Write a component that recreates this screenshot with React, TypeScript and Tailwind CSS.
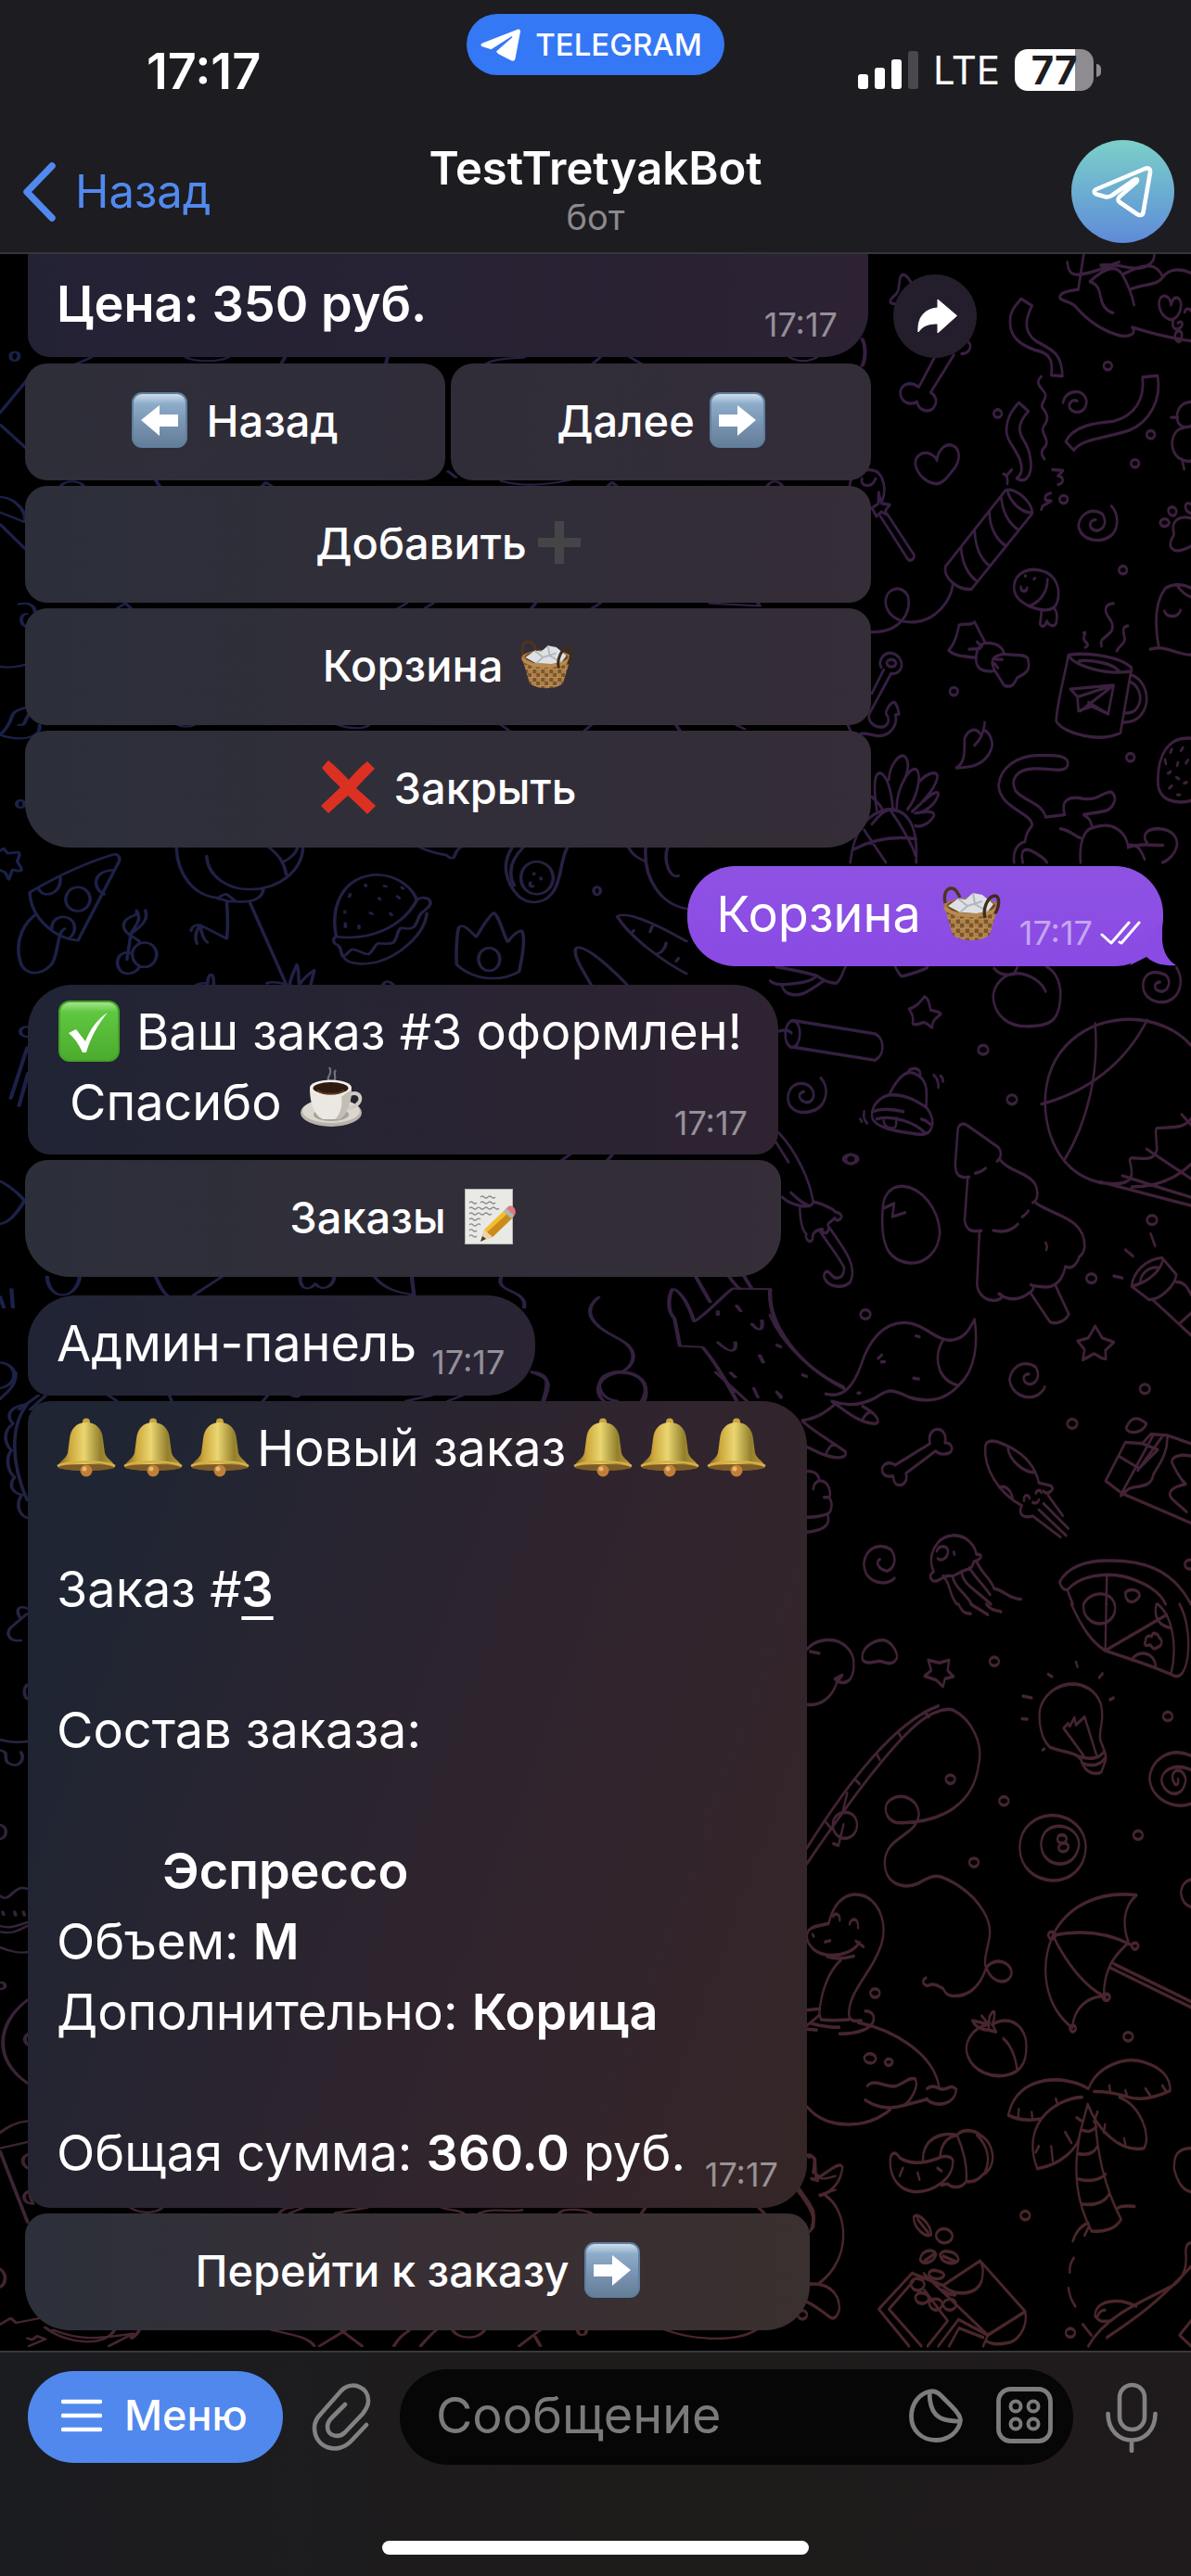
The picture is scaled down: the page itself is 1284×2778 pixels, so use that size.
import type { ReactNode } from "react";

/* ---------- Wallpaper ---------- */

function Wallpaper() {
  return (
    <svg
      aria-hidden="true"
      className="absolute inset-0 h-full w-full"
      viewBox="0 274 1284 2261"
      preserveAspectRatio="xMidYMin slice"
      fill="none"
    >
      <defs>
        <linearGradient id="wp-h" gradientUnits="userSpaceOnUse" x1="0" y1="0" x2="1284" y2="0">
          <stop offset="0" stopColor="#1b2149" />
          <stop offset="0.4" stopColor="#272043" />
          <stop offset="0.8" stopColor="#391f43" />
          <stop offset="1" stopColor="#3d203d" />
        </linearGradient>
        <linearGradient id="wp-v" gradientUnits="userSpaceOnUse" x1="300" y1="1300" x2="700" y2="2500">
          <stop offset="0" stopColor="#4a262d" stopOpacity="0" />
          <stop offset="1" stopColor="#4a262a" />
        </linearGradient>
        <mask id="wp-m" maskUnits="userSpaceOnUse" x="0" y="260" width="1284" height="2290">
          <g stroke="#fff" strokeWidth="3" strokeLinecap="round" strokeLinejoin="round">
            <g transform="translate(840 270) scale(0.3333 0.4209)">
              <g strokeWidth="8">
                <path d="M985 10L968 98M1005 80C1060 40 1090 38 1110 62C1130 90 1140 110 1148 140M1005 80C1032 88 1035 100 1040 120C1045 142 1060 156 1080 160M968 100C930 104 905 110 908 122C920 132 945 130 960 145C1000 182 1050 207 1100 218C1140 224 1156 210 1142 197C1200 212 1260 224 1332 232M932 30C935 60 950 66 985 60C1030 55 1060 40 1100 30M1213 10C1215 30 1190 50 1140 45C1110 42 1080 34 1040 38M1135 100C1180 84 1220 92 1240 70C1260 45 1300 46 1332 58M1110 62C1140 50 1170 38 1200 40C1220 42 1230 52 1240 66" />
                <path d="M1268 178C1238 172 1225 148 1230 128C1238 108 1264 116 1268 140C1274 114 1298 116 1300 140C1298 162 1285 175 1268 178M1275 180C1268 196 1280 206 1292 200C1310 196 1306 176 1290 186M1292 206C1270 212 1284 242 1298 232C1308 214 1300 206 1292 206M1312 158C1314 148 1326 148 1332 154" />
                <path d="M783 124L818 142C800 170 785 205 830 232C880 254 915 262 916 322L880 320C888 280 872 262 830 256C770 240 740 215 748 170C755 145 768 140 783 124Z" />
                <path d="M848 323C820 345 860 355 862 372C860 385 848 390 850 402C866 415 872 430 862 442C850 455 850 462 858 474C870 492 866 500 854 508C844 520 852 528 858 534" />
                <path d="M775 390L806 412C775 440 770 460 790 485C815 515 825 565 800 585C790 592 775 588 768 584C785 575 788 560 780 540C765 505 735 490 735 460C738 425 755 408 775 390Z" />
                <path d="M918 390C924 368 945 362 965 362C990 366 1000 385 990 402C978 418 950 418 940 404C934 390 950 380 964 386M1175 325L1224 321C1238 380 1200 440 1130 462C1060 480 980 482 953 512L927 490C950 450 1020 442 1080 438C1150 425 1184 380 1175 325Z" />
                <path d="M725 573C735 574 740 580 738 598M738 575L752 562M884 562L918 564L902 578C920 580 924 596 902 600M878 622C862 624 858 632 862 640L880 642L852 655L848 664" />
                <path d="M732 615L538 810C530 840 580 872 622 868L818 675C825 650 765 605 732 615ZM738 614C745 645 785 672 815 672M718 630C722 672 745 700 772 715M680 668C680 712 705 744 734 757M632 715C634 760 650 790 680 808M588 762C592 800 610 830 640 848" />
                <path d="M562 855C555 900 505 948 440 952C380 956 345 930 344 900C348 860 400 858 416 885C430 920 400 978 300 978" />
                <path d="M445 560C430 530 460 512 490 522C500 526 508 532 510 538C515 505 545 490 570 504C590 520 580 548 560 565C545 580 530 598 508 598C480 596 455 580 445 560Z" />
                <path d="M502 275L452 350C415 330 380 350 396 378C408 396 435 394 446 388C450 408 480 418 498 405C516 388 505 370 490 364L565 268M590 265C622 264 622 240 612 235M425 80C410 60 395 55 390 75C386 105 386 108 370 118C355 130 352 138 385 137" />
                <path d="M228 602C232 565 290 555 318 568C345 588 345 625 330 645M268 585C260 605 300 612 312 585M300 660L320 650L322 620L330 648L358 652L344 666L346 676L330 670L315 682ZM328 682L415 790C425 800 440 788 436 780L350 676" />
                <path d="M330 1068C318 1050 340 1030 362 1032C395 1036 405 1065 388 1078C375 1088 362 1084 362 1084L290 1190C288 1215 320 1225 340 1220C360 1212 354 1195 346 1188C344 1180 358 1158 372 1158C382 1162 384 1175 388 1188L376 1190C384 1215 360 1245 320 1244C290 1242 288 1236 264 1238M300 1135L338 1075M348 1058C350 1046 374 1044 378 1058C376 1070 352 1070 348 1058M222 1215L230 1230" />
                <path d="M968 705C975 670 1015 660 1045 675C1062 695 1052 715 1028 718C1000 716 998 692 1024 690M968 705C975 745 1040 752 1075 730C1100 710 1098 675 1075 655" />
                <path d="M760 870C755 830 800 812 845 820C900 830 910 870 900 900C890 925 860 928 810 912C780 900 765 890 760 870ZM868 843C868 875 845 900 812 910M848 928L844 958C850 968 862 962 866 950C872 962 890 966 896 955C902 935 895 922 890 916M782 862C782 878 800 875 802 865" />
                <path d="M665 1003L632 952C620 962 600 955 582 960C575 985 570 1005 548 1025C570 1042 610 1040 638 1044M665 1006C710 1005 725 1020 727 1034M665 1006C630 1018 630 1062 650 1072C665 1080 690 1080 697 1076C680 1050 690 1040 727 1034C760 1040 790 1032 804 1045C812 1070 810 1080 770 1095C760 1110 755 1122 728 1115L697 1076M640 1003L655 1015M614 1022L650 1020M700 1048L722 1048M696 1058L708 1070" />
                <path d="M665 1210C660 1240 650 1255 632 1268M662 1230C680 1232 695 1260 686 1278C665 1320 620 1325 573 1326C605 1310 598 1280 600 1250C612 1228 635 1220 652 1240" />
                <path d="M935 1038C930 1070 900 1150 896 1206C920 1240 1040 1262 1104 1236L1140 1070C1100 1036 960 1028 935 1038C960 1066 1060 1090 1140 1078M970 1052C1010 1048 1080 1058 1100 1078M1136 1088C1185 1095 1210 1160 1165 1195C1145 1210 1125 1208 1112 1210M1134 1105C1165 1115 1180 1150 1155 1175C1145 1186 1125 1186 1114 1186M942 1124L1082 1114L1064 1188L1012 1168L968 1180L965 1144L942 1124M965 1144L1082 1114L975 1180M1000 1158L1064 1188" />
                <path d="M985 980C1000 975 975 992 990 1002C1005 1012 995 1016 990 1017M1082 905C1050 906 1050 925 1070 945C1095 975 1060 985 1044 998C1038 1006 1042 1010 1043 1014M1128 962C1105 965 1115 980 1118 995C1118 1010 1100 1012 1092 1026" />
                <path d="M1332 1036C1300 1038 1270 1020 1225 1018L1200 1022M1228 1016C1215 960 1215 900 1250 865C1290 848 1320 860 1332 865M1290 862C1310 882 1320 884 1332 888M1246 924C1255 942 1290 942 1298 922M1332 388C1290 390 1282 420 1290 440C1300 456 1320 454 1332 450M1268 428L1290 428M1310 454C1265 460 1260 510 1290 530C1310 542 1320 540 1332 540M1303 535L1310 560" />
                <path d="M1262 660C1252 670 1268 684 1280 678C1292 668 1280 652 1262 660M1232 698C1236 710 1256 710 1262 698C1256 684 1236 686 1232 698M1332 650C1310 640 1306 668 1332 674M1332 686C1290 678 1268 695 1276 722C1282 735 1262 735 1266 758C1276 778 1310 768 1332 758M1332 1250C1260 1245 1225 1290 1225 1360C1225 1410 1280 1420 1332 1410" />
                <path d="M316 1435C300 1350 315 1332 334 1342C355 1355 365 1400 368 1430M355 1355C358 1315 390 1290 405 1296C425 1310 415 1340 404 1358M380 1430C380 1380 420 1320 444 1330C465 1348 440 1410 415 1432M455 1360C470 1345 505 1330 512 1346C512 1370 470 1412 430 1438M470 1410C500 1385 520 1385 514 1396C505 1420 470 1442 440 1442M460 1440C490 1436 505 1440 500 1450C480 1475 450 1478 440 1474M230 1568C240 1500 270 1445 350 1432C420 1430 450 1480 443 1568M240 1535C300 1510 370 1500 443 1508M275 1485L345 1568M360 1435C400 1480 435 1530 440 1550M300 1400C310 1410 330 1420 335 1435M300 1470C340 1430 355 1430 380 1436" />
                <path d="M862 1452C850 1415 790 1410 765 1385C745 1355 770 1330 820 1328C870 1325 920 1340 932 1322C945 1290 880 1294 840 1294C770 1294 715 1325 710 1370C712 1430 820 1440 818 1474C790 1500 800 1508 795 1515C770 1520 755 1540 760 1568M862 1452L924 1446C910 1410 935 1396 985 1405C1035 1410 1050 1385 1075 1388C1095 1400 1085 1425 1060 1435C1030 1442 1000 1442 985 1446C1005 1455 1010 1465 1012 1478M910 1482C940 1485 955 1500 975 1506M1012 1480C985 1485 970 1520 975 1568M1012 1480C1080 1460 1120 1490 1128 1524C1160 1520 1170 1535 1182 1560M1190 1518C1170 1498 1190 1480 1230 1482C1275 1484 1300 1510 1280 1540C1265 1560 1245 1568 1240 1568M1128 1530C1165 1518 1200 1525 1242 1524M788 1568C780 1540 790 1530 815 1538C840 1548 860 1560 866 1568" />
              </g>
              <g strokeWidth="8">
                {[[707, 418], [1063, 296], [1202, 472], [1151, 546], [920, 638], [1112, 819], [565, 1130], [1136, 1299]].map(([x, y]) => (
                  <ellipse key={`${x}-${y}`} cx={x} cy={y} rx="13" ry="10" />
                ))}
                <path d="M1248 1305l3 10M1270 1278l-4 8M1306 1274l-6 8M1290 1312l-3 8M1322 1306l-6 8M1258 1340l8 -4M1285 1350l8 4M1310 1365l8 -2M1262 1378l8 -6M1288 1395l8 0M824 842l3 -2M795 834l3 0" />
              </g>
            </g>

            <g transform="translate(830 1030) scale(0.3333 0.4464)" strokeWidth="7.6">
              <path d="M0 62C20 74 50 72 85 68C120 66 140 60 152 50C110 40 60 34 20 28M40 76C50 100 90 98 110 92C140 82 160 68 175 62M152 50C170 60 195 68 215 68C235 55 235 40 245 28M405 28C415 40 420 52 430 51C460 45 490 38 510 30" />
              <path d="M450 130C470 125 480 120 500 100C515 105 515 120 520 133C535 135 550 138 553 142C540 152 525 155 525 175C515 172 505 160 495 163C485 165 470 172 462 165C465 150 462 145 450 130Z" />
              <path d="M75 158C45 160 40 215 70 223C100 225 110 165 75 158L340 190C370 200 375 240 340 254L80 223M30 184C45 180 60 180 70 188" />
              <path d="M60 335C70 310 100 305 125 315C150 330 145 355 118 356C90 350 90 332 110 330M60 335C50 370 90 385 130 378C185 370 195 320 165 297M1208 65C1215 42 1245 35 1280 48C1300 62 1290 85 1268 88C1240 86 1238 66 1262 65M1208 65C1200 105 1250 118 1285 112C1330 100 1340 60 1315 30M1325 30" />
              <path d="M725 32C745 50 770 50 800 44C760 42 725 70 722 100C725 145 770 175 840 172C900 170 940 165 940 90C938 60 920 38 895 28M800 44C840 45 880 65 892 88M790 44L800 30" />
              <path d="M386 338C400 315 420 290 448 284C445 275 470 270 482 278C490 285 485 292 486 294C515 315 505 340 506 368C520 380 532 400 522 418C515 435 490 435 455 430C400 425 335 415 330 390C328 360 360 342 386 338C440 335 480 355 506 368M332 378C360 370 400 372 432 378M345 396C400 385 470 405 503 430M368 400C370 420 405 425 408 410M408 410L410 394M490 396C500 398 510 402 518 408M448 284C460 282 475 288 486 294M530 290C540 295 545 305 545 320M552 292C556 294 560 300 560 305M305 378C302 390 305 400 315 406M292 396L297 402" />
              <path d="M1362 218C1320 180 1240 155 1165 155C1030 155 890 220 890 360C895 450 950 530 1070 550C1120 555 1165 555 1170 530C1172 500 1155 495 1170 490C1210 490 1240 500 1252 470C1250 440 1245 420 1252 418C1300 415 1340 420 1362 395M1052 165C1065 280 1030 400 952 496M878 360C1030 330 1150 260 1220 157M1070 548L1362 605M1140 533L1362 585M1170 560C1260 560 1320 535 1362 505M1218 468L1362 540M1332 385L1362 410" />
              <path d="M645 536C610 540 598 530 600 500L608 420C612 408 625 404 640 412L740 465C750 475 750 490 735 498M664 527C680 525 690 520 698 515M745 495C780 530 870 525 865 580C863 592 858 596 850 598M836 618C830 624 822 630 816 632M722 665C750 670 780 668 802 650M640 536L630 640C635 670 660 668 684 666M862 600C920 630 1020 635 1018 705C1010 735 1000 720 998 735C985 755 970 758 956 752C945 790 920 802 890 802C865 800 850 800 844 796C860 800 850 812 840 815C810 835 770 835 740 818C765 822 745 835 720 834C690 832 672 815 670 795L678 668M925 800L967 868C950 890 915 892 905 885L842 815M892 695C898 700 897 706 894 712" />
              <path d="M365 615C365 580 390 558 430 558C490 562 545 610 550 670C545 720 500 745 455 744C400 740 355 720 365 615ZM367 612L402 600L396 632L438 622" />
              <path d="M30 430C80 470 130 540 140 598C128 615 70 605 40 585M20 452L60 500M68 574C90 590 105 600 128 606M97 612C98 640 105 665 118 674C112 685 130 700 138 686C136 670 150 664 170 662C170 675 190 675 190 658C182 645 200 645 210 635C215 645 230 640 232 630C225 618 210 625 205 615C180 605 160 598 140 596M162 666C190 700 220 725 240 755C240 785 210 785 196 770C185 760 172 765 176 780C190 805 240 805 260 790C285 750 240 710 192 658" />
              <path d="M0 870C40 940 140 1010 242 1048M0 808L2 830M180 1060C240 1072 270 1040 295 990C320 930 370 885 440 888C500 890 540 935 590 930C630 925 645 905 662 880C672 930 670 1000 610 1040C560 1080 500 1080 450 1068C390 1045 380 1050 340 1070C290 1090 240 1088 200 1078L212 1084C250 1105 290 1130 340 1132C360 1130 350 1110 300 1090M560 930C530 965 535 1025 610 1040M300 1122C310 1108 320 1102 330 1105M212 1084C180 1105 150 1120 105 1124M105 1126C150 1155 210 1180 245 1200C250 1215 220 1218 180 1208C160 1204 140 1195 120 1188M182 1204C190 1190 200 1180 212 1184M350 974l12 -8M360 983l12 -1M472 920l12 2M464 1022l18 2M284 1058l8 0M22 942l14 4M105 1014l14 4M22 1056l16 10" />
              <path d="M405 1232L518 1180C510 1155 530 1140 555 1148C572 1158 568 1172 566 1178C590 1178 595 1195 580 1203C560 1208 545 1204 536 1198L440 1252C448 1275 425 1285 408 1278C398 1270 400 1262 398 1258C370 1264 360 1250 364 1238C372 1224 395 1225 405 1232Z" />
              <path d="M120 1247C150 1245 160 1260 160 1270C190 1268 200 1300 192 1310C205 1325 200 1345 186 1350C200 1378 170 1390 120 1394M140 1290C142 1278 150 1272 160 1270M175 1310L192 1310M120 1358C150 1358 170 1355 186 1350" />
              <path d="M815 1330C740 1300 690 1240 697 1185C705 1165 740 1175 780 1190C830 1210 860 1240 870 1275C890 1280 910 1278 915 1288C910 1300 890 1302 885 1295M815 1330C800 1350 820 1362 850 1355L940 1406M770 1192C775 1220 820 1250 858 1250M742 1286C760 1280 780 1290 785 1312M870 1340L958 1402M885 1325L965 1385M900 1305L947 1354M822 1318C820 1302 838 1302 840 1312M860 1300C865 1290 875 1292 878 1298M850 1322C860 1326 868 1322 870 1316" />
              <path d="M775 1025C785 985 830 980 860 995C875 1015 865 1035 840 1037C815 1032 815 1012 838 1012M775 1025C780 1060 830 1078 868 1062C880 1055 888 1048 889 1043M304 1470C310 1430 355 1420 390 1435C412 1455 405 1480 380 1488C350 1485 340 1465 356 1460M304 1470C305 1510 350 1520 380 1515C395 1512 400 1508 403 1505" />
              <path d="M995 932L1030 925L1052 896L1075 925L1113 935L1085 955L1087 975C1070 978 1060 965 1048 963L1012 978L1018 953Z" />
              <path d="M1170 800C1175 765 1215 735 1268 731L1315 772C1310 800 1260 835 1225 832ZM1170 800C1200 795 1260 775 1272 735M1198 792C1198 770 1225 752 1255 755M1237 832L1362 918M1315 790C1335 788 1350 800 1362 820M1325 890L1362 865M1112 775L1140 780M1150 712L1174 727M1232 674L1246 702" />
              <path d="M1150 1177L1086 1270L1138 1300L1362 1372M1150 1177L1205 1180L1232 1157L1285 1160C1290 1200 1260 1230 1240 1255C1235 1290 1180 1280 1160 1290L1135 1306M1285 1160L1362 1180M1132 1212L1194 1240M1205 1180L1255 1195L1194 1240M1240 1160L1138 1300M1270 1162L1190 1245M1152 1142C1165 1120 1185 1110 1218 1132C1205 1155 1160 1160 1152 1142ZM1362 1210C1330 1205 1300 1210 1300 1225C1310 1240 1320 1260 1345 1278C1300 1285 1275 1300 1310 1320L1348 1345" />
              <path d="M530 1490C505 1450 540 1405 590 1402C640 1400 665 1430 668 1448C690 1445 688 1460 660 1465C650 1490 640 1482 635 1485C610 1490 600 1500 590 1500C560 1495 555 1510 545 1510C520 1520 510 1495 530 1490M540 1440C545 1425 575 1425 576 1440C575 1458 555 1465 543 1458M595 1442L597 1448M560 1500C590 1525 575 1540 605 1568M590 1500C600 1530 630 1540 650 1565M620 1490C625 1520 660 1530 715 1568M645 1480C670 1510 690 1520 712 1545M668 1465C690 1500 710 1500 725 1530C760 1535 770 1555 812 1556" />
              <path d="M1362 1568C1300 1480 1200 1462 1095 1463C1020 1462 960 1480 937 1515C945 1532 950 1532 962 1534C1000 1500 1080 1490 1150 1502C1210 1515 1260 1535 1280 1568M962 1534L980 1568M1090 1500L1088 1568M1015 1568C1030 1540 1100 1530 1115 1568M1150 1540C1160 1530 1200 1530 1195 1550C1175 1570 1150 1565 1150 1540" />
              {[[690, 229], [783, 349], [262, 493], [1236, 640], [1040, 781], [309, 868], [1213, 1048], [978, 1132], [1358, 1472]].map(([x, y]) => (
                <ellipse key={`${x}-${y}`} cx={x} cy={y} rx="16" ry="11" />
              ))}
            </g>

            <g transform="translate(830 1730) scale(0.3333 0.5102)" strokeWidth="7">
              <path d="M975 0C1010 50 1040 80 1085 98C1160 115 1240 130 1310 152C1360 160 1370 50 1325 0M1085 98L1088 0M1085 98L1284 22M1255 0C1310 30 1315 100 1298 146M1015 0C1010 30 1050 48 1090 38C1115 28 1120 15 1115 0M1170 118C1190 95 1245 100 1248 132M1250 0C1240 30 1260 45 1295 50M1215 78C1215 68 1225 66 1235 68C1240 55 1258 65 1258 70C1275 78 1265 90 1255 90C1240 100 1235 88 1230 86C1215 90 1208 84 1215 78M610 0C625 20 635 20 650 20M650 0L705 22M700 0C720 15 730 12 748 16" />
              <path d="M120 95C160 65 250 68 270 115C275 140 265 155 258 160C240 170 220 165 210 158L234 150C225 160 218 162 216 166C200 200 160 215 120 212M130 100L160 104M300 118C292 90 340 75 370 76C400 82 415 105 410 115C395 132 375 122 355 120C325 124 310 126 300 118Z" />
              <path d="M500 152L522 140L512 118L548 124L580 118L575 140L594 153L566 158L560 174L538 160Z" />
              <path d="M545 215C400 250 250 380 120 515M120 548C260 415 420 270 515 235C545 225 570 220 590 223C660 245 690 300 675 340C660 420 560 460 430 462C380 465 365 435 380 420C410 395 480 405 482 445C475 490 380 490 372 540C365 590 430 605 480 590C530 570 545 568 610 595C680 625 720 670 710 705C700 740 690 755 700 768C730 745 780 755 782 780C775 805 720 805 700 768C680 810 640 830 590 828C570 827 565 818 560 812C545 808 540 802 520 804C500 812 485 795 505 790M500 228L515 238M415 270L425 282M348 320L355 328M275 370L290 380M245 440C190 440 190 490 240 495C295 495 295 440 245 440M238 466L222 510L205 506M250 400L235 440M180 460L200 475" />
              <path d="M120 705C115 680 160 680 190 675C210 620 260 605 310 618C360 635 380 680 360 720C330 780 250 820 256 870C260 885 285 880 296 880M120 705C130 750 250 755 290 715M278 712L303 724M185 745C220 752 250 748 272 744M230 752C190 775 165 820 160 865L165 878C190 880 220 880 256 878M205 660C210 650 228 655 226 668M258 676C262 662 288 662 285 684M178 714L195 711M138 698L142 702M160 855L120 858M120 890C140 880 150 875 160 868M120 898L152 900M225 908C280 908 345 898 335 870C330 862 320 860 308 860M130 885C150 890 200 895 225 894" />
              <path d="M285 884C400 900 530 950 547 1020M305 958C315 945 340 950 343 960C340 975 305 972 305 958M372 968C376 958 396 960 397 968C392 978 374 976 372 968M315 1018C340 1000 380 1025 410 1018C440 1010 450 1000 470 1003C485 1020 450 1055 430 1060C380 1070 335 1060 308 1048M430 1060L510 1046M505 1046C540 1065 600 1058 603 1025C580 1012 575 1030 550 1024C530 1018 520 1018 508 1024M120 1062C180 1110 310 1112 390 1068" />
              <path d="M905 302C870 280 865 230 880 210C920 155 1040 155 1070 210C1085 245 1060 270 1070 290C1080 305 1090 320 1086 330C1080 340 1078 345 1072 355C1050 362 1020 355 1010 335C1000 310 950 315 905 302M1000 322C1040 330 1070 325 1082 310M1008 335C1040 345 1070 340 1084 325M1015 320L950 262L965 252L970 258L985 240L990 255L1018 238L1056 318M900 148L913 153M990 122L995 132M1065 155L1076 147M1100 202L1112 198M818 194L847 198M815 242L833 243M882 308L888 306" />
              <path d="M808 515C808 470 860 447 915 446C975 448 1022 475 1022 515C1018 560 970 584 915 584C860 582 810 560 808 515ZM877 508C880 480 905 469 940 469C980 472 1000 490 1000 508C995 535 970 549 938 549C905 548 880 535 877 508ZM930 496C930 485 958 485 960 496C958 508 930 508 930 496M934 515C936 502 966 502 966 513C962 526 936 526 934 515" />
              <path d="M1362 320C1290 300 1230 330 1228 370C1235 410 1300 435 1362 422M1362 350C1310 335 1265 350 1267 375C1280 408 1340 412 1345 370C1335 340 1295 350 1303 370C1310 388 1325 382 1320 370M1362 582C1340 585 1328 600 1330 612C1335 630 1345 636 1362 640" />
              <path d="M915 700C960 640 1060 605 1186 615C1150 635 1135 670 1160 715C1130 735 1080 760 1080 828C1030 830 985 850 978 895C890 850 870 770 915 700C990 690 1080 690 1168 720M915 700C960 760 1020 810 1085 830M900 700C902 690 920 690 924 700C920 710 904 710 900 700M1170 722C1172 714 1190 714 1192 722C1188 732 1174 732 1170 722M1076 830C1078 822 1098 822 1100 830C1096 840 1080 840 1076 830M970 897C972 888 988 888 990 897C986 906 974 906 970 897M1112 760L1362 840M1100 768L1362 852" />
              <path d="M708 888C650 895 625 930 640 955C660 990 720 1000 760 996C820 990 835 960 828 920C815 885 770 870 720 888L732 904L708 900ZM708 888L655 880C665 895 690 900 708 900M708 888L685 870M710 886C705 870 720 860 726 862C728 870 725 880 718 888M755 918C785 935 795 960 800 985" />
              <path d="M1032 1022C1060 975 1150 955 1210 968C1270 980 1295 1000 1295 1028C1240 1045 1190 1050 1150 1040C1110 1032 1080 1030 1048 1030M1030 1024C960 995 800 990 771 1080C800 1090 840 1092 876 1088M1010 1042C920 1045 810 1100 865 1193C940 1185 1000 1150 1003 1118L1028 1057C1060 1110 1130 1160 1210 1150C1235 1125 1200 1060 1130 1042M1003 1118C980 1200 990 1260 1040 1325C1080 1328 1120 1320 1136 1300C1080 1230 1060 1160 1052 1090M992 1085L1012 1094M1060 1073L1048 1094M1010 1112C1030 1116 1040 1115 1056 1105M1000 1162C1030 1165 1050 1160 1060 1145M998 1215C1040 1222 1070 1215 1086 1205M1012 1268C1060 1272 1090 1260 1098 1245M1126 1276C1140 1270 1160 1272 1180 1273M805 1068L803 1086M847 1074L849 1088M925 1046L930 1056M955 1116L975 1138M910 1146L915 1176M860 1158L870 1146M1098 1018L1101 1030M1150 1028L1156 1040M1215 1024L1230 1038M1270 1018L1280 1028M1084 1100L1080 1116M1146 1130L1150 1142" />
              <path d="M1030 1308C1010 1312 990 1325 980 1346M1030 1318L1018 1334M983 1382C970 1395 970 1400 970 1412M966 1446C970 1465 978 1475 988 1484M1012 1522L1040 1545M1090 1550C1180 1510 1250 1480 1362 1400M1030 1568C1080 1510 1180 1480 1290 1445C1340 1430 1350 1400 1345 1370C1345 1355 1352 1350 1362 1350M1185 1484C1130 1465 1050 1470 1052 1505C1070 1520 1080 1515 1100 1515M1060 1505C1065 1495 1075 1492 1084 1492M1325 1545L1362 1515M1325 1545L1362 1568M1362 1150C1320 1150 1305 1165 1308 1195C1320 1225 1340 1240 1362 1242" />
              <path d="M495 1175C495 1130 550 1115 605 1122C630 1105 670 1115 680 1122C730 1140 735 1190 690 1205C670 1220 650 1222 635 1220C620 1235 590 1235 575 1225L555 1228M550 1168C555 1135 580 1125 605 1122C625 1150 640 1190 635 1220M670 1122C705 1145 715 1175 695 1202M390 1190C385 1155 405 1155 420 1170C450 1185 500 1182 540 1172C560 1165 585 1165 592 1175C595 1215 530 1242 470 1242C420 1240 395 1215 390 1190ZM430 1192L420 1208M478 1202L484 1216M542 1192L555 1198" />
              <path d="M465 1295C480 1285 520 1310 522 1332C505 1340 465 1320 465 1295ZM478 1300L512 1328M537 1335C540 1315 585 1315 591 1335C588 1355 542 1355 537 1335M486 1385C490 1365 530 1360 538 1374C530 1392 495 1398 486 1385M500 1388L530 1374M550 1375C560 1362 605 1368 610 1385C605 1398 555 1395 550 1375M560 1378L604 1390M514 1415C520 1402 560 1410 564 1418C555 1430 518 1428 514 1415" />
              <path d="M460 1414L352 1490L450 1568M460 1414L560 1440L680 1388L826 1495L705 1545L498 1415M385 1490L465 1430M385 1490L490 1568M560 1440C600 1465 670 1460 685 1430C692 1410 690 1400 680 1388M600 1460C580 1460 570 1455 560 1450M826 1495C835 1530 800 1562 760 1562C730 1566 715 1562 700 1558M690 1568L705 1545L610 1512L545 1568M690 1550L612 1530L580 1568M575 1515L510 1568M500 1450L575 1515M455 1435C460 1422 498 1422 500 1438C496 1455 458 1455 455 1435M470 1465C475 1452 510 1452 514 1468C508 1482 474 1482 470 1465M515 1478C520 1465 555 1465 558 1480C552 1496 520 1496 515 1478M560 1480C565 1465 600 1465 603 1480C598 1496 565 1496 560 1480" />
              <path d="M120 1165C150 1160 150 1190 148 1215C180 1205 225 1175 235 1190C230 1220 200 1245 162 1250M180 1250C250 1280 270 1380 160 1435M130 1437C180 1435 225 1450 225 1490C215 1515 200 1510 190 1505C160 1490 140 1480 120 1475M90 1240C120 1265 145 1290 142 1315L130 1325M134 1214L156 1218" />
              {[[726, 121], [1287, 237], [584, 370], [757, 416], [660, 546], [1191, 488], [340, 822], [1159, 914], [826, 1292], [972, 1540], [105, 1502]].map(([x, y]) => (
                <ellipse key={`${x}-${y}`} cx={x} cy={y} rx="15" ry="9" />
              ))}
            </g>

            <g transform="translate(0 905) scale(0.4719 0.3333)" strokeWidth="7.5">
              <path d="M0 38L8 30L18 46L42 42C50 55 38 62 40 72C42 85 52 88 48 102C40 106 30 96 28 100L20 130L12 108L0 100" />
              <path d="M68 172C130 120 200 75 258 50C270 46 275 58 272 72L178 328C120 320 70 250 68 172ZM88 160C95 190 140 185 138 125M262 100C210 100 210 160 238 178M150 195C152 140 205 145 206 195C202 245 152 245 150 195M118 290C118 240 165 240 170 280C172 300 165 315 158 320M80 245C40 290 35 360 50 410C70 450 105 430 120 400C135 360 130 300 148 290" />
              <path d="M296 310C270 280 285 255 310 245C315 235 312 232 312 230C325 260 310 280 296 310C325 280 340 260 332 230M296 310C320 330 325 335 315 340M298 315L290 390M302 372C304 325 355 320 358 372C355 430 304 425 302 372M302 370C270 355 260 400 275 425C290 445 315 430 318 412" />
              <path d="M403 27C405 110 440 185 500 190C505 180 515 178 518 178L540 202C580 205 600 190 602 160M472 55C475 120 520 165 575 162C640 160 690 100 692 27M615 27C640 55 650 80 654 115M645 75C660 65 675 50 680 27M498 192L520 200L540 202M518 202C520 240 522 280 518 322L458 278C445 275 438 285 436 296M458 278C445 300 445 320 450 338M458 278C460 305 465 325 474 334M570 202L654 470M450 470C470 460 475 470 474 470C475 425 490 430 488 470M610 466C620 460 640 465 654 470M662 470C665 440 675 420 678 406C685 430 680 450 684 470C695 450 705 435 718 424L710 470" />
              <path d="M768 315C755 220 780 120 862 115C910 118 945 160 952 198C920 280 850 330 768 315C760 320 760 335 768 340C780 345 778 365 782 378C795 378 795 360 805 356C825 360 830 375 842 372C855 360 855 340 865 337C880 338 890 340 898 335C910 320 905 300 915 288C925 285 935 295 945 285C955 270 955 250 962 240C975 225 990 210 980 195C970 185 955 190 952 198M784 378C790 400 820 410 860 398C910 380 970 310 975 240" />
              <path d="M1043 405C1042 360 1044 310 1048 285C1060 270 1075 300 1088 316C1100 290 1115 250 1128 238C1140 245 1150 310 1160 332C1172 310 1185 295 1192 296C1202 320 1192 390 1186 428C1140 465 1080 455 1043 405ZM1093 388C1095 340 1140 340 1142 388C1140 438 1095 438 1093 388" />
              <path d="M1170 27C1145 80 1155 140 1185 185C1210 215 1250 210 1268 160C1285 110 1280 70 1296 27M1190 125C1192 55 1260 55 1264 125C1260 195 1192 195 1190 125M1195 27C1165 70 1160 110 1175 150M960 27C980 40 1010 50 1018 50C1022 52 1025 65 1036 60C1042 50 1040 35 1052 27M1475 27C1470 130 1510 210 1568 225M1525 27C1515 70 1530 130 1550 118M1436 27C1445 50 1455 60 1472 70" />
              <path d="M1568 435C1520 400 1440 320 1410 250C1430 230 1500 275 1568 330M1350 470C1330 420 1310 380 1315 355C1325 335 1370 380 1432 470M1492 275L1485 300M1522 335C1520 355 1510 370 1498 372M1448 295L1442 305M1550 385L1545 395M875 470C882 455 890 460 898 470M1356 167C1358 150 1370 150 1372 167C1370 184 1358 184 1356 167" />
              <path d="M800 178l-2 8M835 147l1 5M878 151l4 2M918 156l3 4M866 191l2 4M908 185l4 6M788 233l0 5M846 238l4 4M892 240l3 6M789 272l0 12M820 280l0 8M1220 110l0 4M1236 125l0 5M1212 140C1208 152 1214 155 1218 152" />
            </g>

            <g transform="translate(0 900) scale(0.8189 0.3954)" strokeWidth="5.2">
              <path d="M885 1240C880 1260 878 1300 888 1320L895 1395L925 1398C950 1460 960 1510 970 1545M888 1240C905 1260 912 1320 914 1328C935 1300 960 1240 965 1238L1014 1240C1010 1330 1050 1450 1110 1505M916 1206L935 1275M960 1206C965 1220 970 1235 975 1240M980 1206L990 1240M945 1300L945 1310M970 1285L975 1300M990 1335C1000 1360 1005 1350 1003 1325M945 1385C958 1410 970 1420 968 1385M1000 1420L1005 1440M962 1468L968 1480M962 1508L968 1520" />
              <path d="M788 1262C765 1300 780 1340 810 1370C850 1410 830 1460 815 1468C780 1480 785 1530 795 1545M815 1468C850 1470 855 1510 845 1545M700 1465C725 1470 722 1500 715 1545M62 1206C65 1275 100 1270 105 1206M205 1206C210 1230 215 1250 220 1256M255 1256L292 1206M395 1206C395 1250 410 1240 415 1225C425 1250 440 1230 440 1206M493 1206C510 1250 535 1250 545 1256L542 1206M660 1206C650 1250 695 1240 690 1290" />
              <path d="M0 945C15 960 30 990 32 1000C20 1040 10 1060 0 1062M14 720L36 580M25 740L37 650M0 1440C25 1445 25 1500 0 1510M0 1260L5 1290M15 1240L17 1290M740 888L750 873M800 888L806 873M60 1530L40 1568M50 1530L25 1568M37 525C25 520 22 550 37 552" />
              <path d="M1111 885C1111 868 1129 868 1129 885C1129 902 1111 902 1111 885" />
            </g>

            <g transform="translate(0 260) scale(0.8189 0.4209)" strokeWidth="5">
              <path d="M14 295C14 280 25 280 25 295C24 310 14 310 14 295M0 440L36 355M0 470L34 530M0 655C25 660 35 700 33 720L0 695M0 725L34 790M25 930C50 920 50 960 40 990C25 990 25 955 35 955M0 1090C10 1095 25 1090 34 1085M34 1195C5 1210 25 1220 0 1265C30 1285 55 1270 52 1240M40 1205C30 1235 35 1240 25 1240M22 1442C22 1430 32 1430 32 1442C32 1455 22 1455 22 1442" />
              <path d="M100 315L120 298M245 298C255 310 290 310 300 298M370 315L375 298M510 298L508 315M640 315C650 300 680 300 690 298M780 315L790 298M830 298L845 315M1040 298C1050 310 1065 310 1075 298M1135 250C1140 270 1140 300 1135 320M80 628C85 612 105 612 110 628M205 612L210 628M345 628L350 618L358 628M660 615C690 630 720 625 750 612M800 628L806 618L812 628M1010 628C1015 612 1025 612 1030 628M590 590L600 605M155 940L165 928M165 928L172 940M525 940L535 928M560 940L570 928M705 928L700 940M780 940L790 928M935 928L1000 935L998 928M235 1240C240 1245 250 1245 255 1240M445 1240C460 1250 480 1250 485 1240M660 1240L670 1254M770 1254L778 1240M890 1240L895 1254M970 1240L980 1250" />
            </g>

            <g transform="translate(0 1480) scale(0.5612 0.3827)" strokeWidth="6.4">
              <path d="M30 0C32 40 10 60 0 75M52 90C20 95 10 120 25 145C5 165 8 200 22 220C10 240 15 280 28 295C15 320 25 340 42 345C30 370 35 400 52 410M52 90C20 150 20 250 52 360M40 755C20 760 10 740 20 720L52 680M52 665C35 655 30 670 38 690M0 1035C15 1040 30 1045 52 1040M0 1065C20 1070 5 1085 15 1100C35 1120 50 1090 40 1070M52 880C45 890 45 910 52 920M0 1275C15 1280 15 1310 0 1315M0 1475C20 1500 25 1440 52 1455M0 1560C20 1568 30 1560 52 1550M5 1520l2 8M28 1520l2 10M45 1520l2 10" />
              <path d="M225 81L205 62M330 81L325 64M505 81L515 64M560 64C565 70 572 70 576 64M780 81L830 64M860 81L890 64M1022 0C1070 20 1050 50 1045 81M1160 10C1190 -15 1225 0 1238 30C1245 60 1240 75 1238 81M1160 10C1140 40 1160 80 1185 80M1375 0L1435 81M1448 45L1456 70M1492 55L1500 72" />
            </g>

            <g transform="translate(0 2050) scale(0.574 0.3333)" strokeWidth="6.8">
              <path d="M0 100C25 110 40 90 52 80M0 150C20 165 40 170 52 165M52 320C-10 400 -10 520 52 590M52 430C45 440 45 455 52 465M0 265C10 258 14 285 2 285M0 750C15 730 30 715 52 712M0 800L52 780M52 820C40 830 40 850 52 865M0 810L52 1040M52 940C40 955 45 980 62 980C55 960 60 945 52 940M0 1190C15 1210 10 1240 0 1250M0 1370L20 1350L30 1365L90 1345M52 1415L60 1420L70 1408L85 1418L55 1440M85 1380C130 1440 200 1440 215 1388M100 1388C160 1430 200 1410 250 1400L205 1440M262 1388C255 1410 240 1430 250 1400M245 992C260 1010 290 1015 305 992M525 1010C530 995 540 992 550 992M545 1010L570 992M630 1010L690 992M830 992C840 1000 860 1000 870 1010M900 1010C930 990 960 1010 980 1000M1050 1010C1060 990 1100 1000 1110 1010M1205 1010L1212 992M1425 992L1435 1010M1500 930C1520 980 1535 1000 1525 1060M1520 830C1535 820 1530 850 1528 880C1545 890 1530 910 1568 890M1540 950L1568 935" />
              <path d="M510 1388C540 1400 580 1410 590 1440M600 1440L650 1388M680 1440L640 1388M740 1440C750 1410 760 1400 770 1388M790 1440C800 1420 810 1400 820 1388M850 1388C860 1420 900 1420 910 1388M975 1440L1015 1388M1015 1440L1005 1410M1085 1388C1085 1410 1100 1410 1102 1388M1250 1388C1300 1420 1380 1430 1420 1388" />
            </g>
          </g>
        </mask>
      </defs>
      <g mask="url(#wp-m)">
        <rect x="0" y="260" width="1284" height="2290" fill="url(#wp-h)" />
        <rect x="0" y="260" width="1284" height="2290" fill="url(#wp-v)" />
      </g>
    </svg>
  );
}

/* ---------- Emoji drawings ---------- */

function ArrowTile({ left = false }: { left?: boolean }) {
  return (
    <svg viewBox="0 0 60 60" className="h-[60px] w-[60px] shrink-0" role="img" aria-label={left ? "⬅️" : "➡️"}>
      <defs>
        <linearGradient id="tile" x1="0" y1="0" x2="0" y2="1">
          <stop offset="0" stopColor="#d5e3f0" />
          <stop offset="0.2" stopColor="#8dacc9" />
          <stop offset="0.6" stopColor="#7891b0" />
          <stop offset="1" stopColor="#647d97" />
        </linearGradient>
      </defs>
      <rect x="1" y="1" width="58" height="58" rx="10" fill="url(#tile)" stroke="#5f7f9e" strokeWidth="2" />
      <path
        d={left ? "M10 30L30 14V24H50V37H30V47Z" : "M50 30L30 14V24H10V37H30V47Z"}
        fill="#fff"
      />
    </svg>
  );
}

function Basket({ className }: { className: string }) {
  return (
    <svg viewBox="0 0 64 60" className={className} role="img" aria-label="🧺">
      <defs>
        <pattern id="weave" width="10" height="10" patternUnits="userSpaceOnUse">
          <rect width="10" height="10" fill="#ad8049" />
          <rect width="5" height="5" fill="#7c552a" />
          <rect x="5" y="5" width="5" height="5" fill="#7c552a" />
          <path d="M0 5H10M5 0V10" stroke="#c79c63" strokeWidth="0.8" />
        </pattern>
      </defs>
      <path d="M4 18C2 8 5 2 11 2C15 2 17 6 20 12" fill="none" stroke="#4b3520" strokeWidth="3.4" />
      <path d="M3 22L12 52C20 60 44 60 52 52L61 22Z" fill="url(#weave)" />
      <ellipse cx="32" cy="22" rx="30" ry="10" fill="#a9793f" />
      <ellipse cx="32" cy="21" rx="26" ry="8" fill="#6d4a25" />
      <path d="M7 21L18 13L26 14L34 7L44 9L56 19L50 27L38 29L20 28Z" fill="#dde1e5" />
      <path d="M18 13L28 21L20 28M34 7L36 19L50 27M28 21L44 16" fill="none" stroke="#b0b7bf" strokeWidth="2" />
      <path d="M4 23C14 34 50 34 60 23" fill="none" stroke="#b98a4f" strokeWidth="4" />
      <path d="M47 34C44 24 50 11 57 10C63 10 63 20 58 29" fill="none" stroke="#3f2c1b" strokeWidth="3.4" />
    </svg>
  );
}

function Bell() {
  return (
    <svg viewBox="0 0 64 64" className="h-16 w-16 shrink-0" role="img" aria-label="🔔">
      <defs>
        <linearGradient id="bell" x1="0" y1="0" x2="1" y2="0">
          <stop offset="0" stopColor="#7d5a1c" />
          <stop offset="0.22" stopColor="#cda83c" />
          <stop offset="0.46" stopColor="#ead671" />
          <stop offset="0.75" stopColor="#93802c" />
          <stop offset="1" stopColor="#bd9438" />
        </linearGradient>
      </defs>
      <circle cx="32" cy="4.5" r="4" fill="#caa53d" />
      <path d="M32 5C21 5 15 12 14 23L12 38C10 45 3 46 1 53C8 58 56 58 63 53C61 46 54 45 52 38L50 23C49 12 43 5 32 5Z" fill="url(#bell)" />
      <ellipse cx="32" cy="53.5" rx="30" ry="3.5" fill="#7d5a26" />
      <path d="M1 52C12 46 52 46 63 52" fill="none" stroke="#d6b04b" strokeWidth="2.5" />
      <circle cx="32" cy="57" r="6.5" fill="#c07f38" />
      <circle cx="30" cy="55" r="2.5" fill="#e8b96c" />
    </svg>
  );
}

function Coffee() {
  return (
    <svg viewBox="0 0 66 60" className="h-[60px] w-[66px] shrink-0 overflow-visible" role="img" aria-label="☕">
      <path d="M31 8C26 3 36 1 31 -7M36 8C40 3 34 0 38 -4" fill="none" stroke="#70737a" strokeWidth="2.2" />
      <ellipse cx="33" cy="42" rx="33" ry="15" fill="#b9b4ab" />
      <ellipse cx="33" cy="40" rx="31" ry="13" fill="#dbd7cf" />
      <ellipse cx="33" cy="44" rx="19" ry="7" fill="#a8a297" />
      <path d="M53 22C64 18 67 27 62 32C59 36 54 37 49 37" fill="none" stroke="#cfcbc3" strokeWidth="4" />
      <path d="M10 16C10 36 18 48 25 49H40C47 48 55 36 55 16Z" fill="#ebe8e3" />
      <path d="M44 25C46 35 42 45 37 49H40C47 48 55 36 55 16Z" fill="#c2beb6" />
      <ellipse cx="32.500" cy="15" rx="22.500" ry="8.500" fill="#f3f1ed" />
      <ellipse cx="32.500" cy="15.500" rx="19" ry="6.500" fill="#2e1a10" />
      <path d="M18 18C24 23 41 23 47 18" fill="none" stroke="#5d3b21" strokeWidth="2" />
    </svg>
  );
}

function CheckTile() {
  return (
    <svg viewBox="0 0 66 66" className="h-[66px] w-[66px] shrink-0" role="img" aria-label="✅">
      <defs>
        <linearGradient id="green" x1="0" y1="0" x2="0" y2="1">
          <stop offset="0" stopColor="#a9e890" />
          <stop offset="0.18" stopColor="#5fc740" />
          <stop offset="1" stopColor="#4bab2d" />
        </linearGradient>
      </defs>
      <rect x="1" y="1" width="64" height="64" rx="11" fill="url(#green)" stroke="#45a02a" strokeWidth="2" />
      <path d="M11 35L19 31L29 44C34 31 42 20 53 13C43 25 35 39 30 56H26C22 47 17 40 11 35Z" fill="#fff" />
    </svg>
  );
}

function Cross() {
  return (
    <svg viewBox="0 0 60 60" className="h-[60px] w-[60px]" role="img" aria-label="❌">
      <path
        d="M9 1C18 8 25 16 31 22C37 15 43 8 51 2L59 10C52 17 45 24 39 31C46 37 53 43 60 50L51 59C44 52 37 45 30 39C23 45 16 52 9 58L1 50C8 43 15 37 22 30C15 23 8 17 2 9Z"
        fill="#dc3122"
      />
    </svg>
  );
}

function Plus() {
  return (
    <svg viewBox="0 0 46 46" className="h-[46px] w-[46px]" role="img" aria-label="➕">
      <path d="M18 0H28V18H46V28H28V46H18V28H0V18H18Z" fill="#454547" />
    </svg>
  );
}

function Memo() {
  return (
    <svg viewBox="0 0 56 60" className="h-[60px] w-[56px]" role="img" aria-label="📝">
      <rect x="0.5" y="0.5" width="51" height="59" fill="#e9e9e6" stroke="#b9b9b4" />
      <path
        d="M17 9q2 -2 4 0t4 0t4 0t4 0M5 15q2 -2 4 0t4 0M17 15q2 -2 4 0t4 0t4 0t4 0M5 21q2 -2 4 0t4 0t4 0t4 0t4 0t4 0t4 0t4 0M5 27q2 -2 4 0t4 0t4 0t4 0t4 0t4 0M5 33q2 -2 4 0t4 0t4 0M5 39q2 -2 4 0t4 0t4 0M5 45q2 -2 4 0t4 0M5 51q2 -2 4 0t4 0"
        fill="none"
        stroke="#8c8c8c"
        strokeWidth="1.2"
      />
      <path d="M17 57L21 44L44 22L52 31L30 52Z" fill="#f3bd2f" />
      <path d="M24 47L48 25L52 31L30 52Z" fill="#c98b1c" />
      <path d="M17 57L21 44L30 52Z" fill="#edd2a6" />
      <path d="M17 57L19 51L23 54Z" fill="#3c3c3c" />
      <path d="M44 22L47 19C51 16 57 23 54 28L52 31Z" fill="#e0797c" />
      <path d="M42 24L45 21L53 29L50 32Z" fill="#a9b8bf" />
    </svg>
  );
}

/* ---------- Building blocks ---------- */

function Time({ className = "" }: { className?: string }) {
  return <time className={`text-[36px] leading-10 text-white/50 ${className}`}>17:17</time>;
}

function KeyButton({
  children,
  className = "",
  tone = "from-[#2c2f3a] to-[#352d38]",
}: {
  children: ReactNode;
  className?: string;
  tone?: string;
}) {
  return (
    <button
      type="button"
      className={`flex h-[126px] w-full items-center justify-center rounded-3xl bg-linear-to-r pb-1 text-[47px] font-medium leading-none text-white ${tone} ${className}`}
    >
      {children}
    </button>
  );
}

function Line({ children = null, className = "" }: { children?: ReactNode; className?: string }) {
  return <div className={`flex h-[76px] items-center whitespace-pre ${className}`}>{children}</div>;
}

/* ---------- Page ---------- */

export default function App() {
  return (
    <div className="flex min-h-screen flex-col overflow-hidden bg-black font-['Inter',sans-serif] text-white">
      <header className="relative border-b-2 border-[#36353a] bg-[#1d1c21]">
        <div className="grid h-[141px] grid-cols-3">
          <time className="pl-[158px] pt-[46px] text-[54px] font-semibold leading-[62px]">17:17</time>
          <div className="mt-[15px] flex h-[66px] items-center gap-4 justify-self-center rounded-full bg-[#3478f6] pl-[15px] pr-6">
            <svg viewBox="0 0 43 35" className="h-[35px] w-[43px]" aria-hidden="true">
              <path d="M40 .7L2 15.500C0 16.500 0 18.500 2 19.300L11.500 22.300L33 8.500C34 8 34.800 8.800 34 9.600L17 24.500L19 27L33 34.300C35.500 35.300 37 34.300 37.500 32L43 3C43 1 42 0 40 .7Z" fill="#fff" />
            </svg>
            <span className="text-[33px] font-medium leading-none">TELEGRAM</span>
          </div>
          <div className="mt-[53px] flex h-[45px] items-center justify-self-end pr-[97px]">
            <svg viewBox="0 0 65 42" className="h-[42px] w-[65px]" aria-label="Сигнал" role="img">
              <rect x="0" y="25" width="11" height="16" rx="3" fill="#fff" />
              <rect x="18" y="18" width="11" height="23" rx="3" fill="#fff" />
              <rect x="36" y="9" width="11" height="32" rx="3" fill="#fff" />
              <rect x="54" y="0" width="11" height="41" rx="3" fill="#4a484d" />
            </svg>
            <span className="ml-4 text-[42px] leading-[46px]">LTE</span>
            <div className="ml-4 flex h-[45px] w-[85px] items-center justify-center rounded-[14px] bg-linear-to-r from-white from-77% to-[#8e8c91] to-77%">
              <span className="text-[42px] font-bold leading-none text-[#1d1c21]">77</span>
            </div>
            <span className="ml-[3px] h-[14px] w-[5px] rounded-r-full bg-[#8e8c91]" />
          </div>
        </div>
        <div className="grid h-[131px] grid-cols-[1fr_auto_1fr] items-center">
          <button type="button" className="flex items-center gap-[21px] justify-self-start pl-6 text-[#5189ee]">
            <svg viewBox="0 0 36 64" className="h-16 w-9" fill="none" aria-hidden="true">
              <path d="M32 4L5 32L32 60" stroke="currentColor" strokeWidth="7.500" strokeLinecap="round" strokeLinejoin="round" />
            </svg>
            <span className="text-[49px] leading-[56px]">Назад</span>
          </button>
          <div className="flex flex-col items-center">
            <h1 className="text-[49px] font-semibold leading-[54px]">TestTretyakBot</h1>
            <p className="text-[38px] leading-[50px] text-[#8b8a8f]">бот</p>
          </div>
          <button
            type="button"
            aria-label="Профиль бота"
            className="mr-[18px] h-[111px] w-[111px] justify-self-end rounded-full bg-linear-to-b from-[#7cd0c8] to-[#5f8ad8]"
          >
            <svg viewBox="0 0 111 111" className="h-full w-full" fill="none" aria-hidden="true">
              <path
                d="M79 31L27 53C24 54.500 24 57 27 58.500L36 61C39 62 42 61 44 59.500L68 43C71 41.500 72 43 70 45.500L52 61C50 63.500 50 65.500 52 67L71 80C74 82 77 81 77.500 78L85 35C85.500 31 83 29.500 79 31Z"
                stroke="#fff"
                strokeWidth="4.600"
                strokeLinejoin="round"
              />
            </svg>
          </button>
        </div>
      </header>

      <main className="relative flex flex-1 flex-col items-start overflow-hidden px-[27px] pb-[22px]">
        <Wallpaper />

        <section className="relative w-[912px] max-w-full">
          <div className="mx-[3px] flex h-[111px] items-center justify-between rounded-bl-3xl rounded-br-[48px] bg-linear-to-r from-[#232234] to-[#2c2233] pb-1 pl-[31px] pr-[33px]">
            <p className="text-[54px] font-semibold leading-[76px]">Цена: 350 руб.</p>
            <Time className="mt-11" />
          </div>
          <button
            type="button"
            aria-label="Поделиться"
            className="absolute left-full top-[22px] ml-6 h-[90px] w-[90px] rounded-full bg-[#241e2c]"
          >
            <svg viewBox="0 0 90 90" className="h-full w-full" aria-hidden="true">
              <path d="M68.500 44.500L48 27V36C34 37 26 46 27 62C32 55 38 53 48 53V63Z" fill="#fff" stroke="#fff" strokeLinejoin="round" />
            </svg>
          </button>
          <div className="mt-[7px] flex flex-col gap-[6px]">
            <div className="flex gap-[6px]">
              <KeyButton className="gap-5" tone="from-[#2e2e39] to-[#302d39]">
                <ArrowTile left />
                Назад
              </KeyButton>
              <KeyButton className="gap-4" tone="from-[#302d39] to-[#332d38]">
                Далее
                <ArrowTile />
              </KeyButton>
            </div>
            <KeyButton className="gap-3">
              Добавить
              <Plus />
            </KeyButton>
            <KeyButton className="gap-[18px]">
              Корзина
              <Basket className="h-[54px] w-[58px]" />
            </KeyButton>
            <KeyButton className="gap-5 rounded-b-[48px]">
              <Cross />
              Закрыть
            </KeyButton>
          </div>
        </section>

        <div className="relative mr-[3px] mt-5 flex h-[108px] items-center self-end rounded-[52px] bg-linear-to-b from-[#8e52e3] to-[#8a4ae4] pb-1 pl-[31px] pr-6">
          <p className="flex items-center gap-[22px] text-[54px] leading-[76px]">
            Корзина
            <Basket className="h-[60px] w-16" />
          </p>
          <Time className="ml-5 mt-10" />
          <svg viewBox="0 0 44 26" className="ml-2 mt-10 h-[26px] w-11" fill="none" aria-label="Прочитано" role="img">
            <path d="M2 15L12 24L31 2M21 23L23 24L42 2" stroke="#fff" strokeWidth="3" strokeLinecap="round" strokeLinejoin="round" />
          </svg>
          <svg viewBox="0 0 50 50" className="absolute -right-[14px] bottom-0 h-[50px] w-[50px]" aria-hidden="true">
            <path d="M35 0V22C36 36 42 44 50 49C36 50 26 47 18 40L0 49Z" fill="#8a4ae4" />
          </svg>
        </div>

        <section className="relative mt-5 w-[815px] max-w-full">
          <div className="relative mx-[3px] rounded-b-3xl rounded-t-[48px] bg-linear-to-r from-[#202434] to-[#2f2332] pb-[19px] pl-[33px] pt-3 text-[54px]">
            <Line className="gap-[18px]">
              <CheckTile />
              <span>Ваш заказ #3 оформлен!</span>
            </Line>
            <Line className="gap-5 pl-3">
              <span>Спасибо</span>
              <Coffee />
            </Line>
            <Time className="absolute bottom-[14px] right-[33px]" />
          </div>
          <KeyButton className="mt-[6px] gap-5 rounded-b-[48px]">
            Заказы
            <Memo />
          </KeyButton>
        </section>

        <div className="relative ml-[3px] mt-5 flex h-[108px] items-center rounded-[52px] rounded-bl-3xl bg-linear-to-r from-[#202434] to-[#2a2434] pb-1 pl-[31px] pr-[33px]">
          <p className="text-[54px] leading-[76px]">Админ-панель</p>
          <Time className="ml-4 mt-10" />
        </div>

        <section className="relative mt-[6px] w-[846px] max-w-full">
          <div className="relative mx-[3px] rounded-b-[48px] rounded-tl-3xl rounded-tr-[48px] rounded-bl-3xl bg-linear-110 from-[#1f2533] from-10% via-[#30242e] via-60% to-[#352627] pb-[22px] pl-[31px] pt-3 text-[54px]">
            <Line className="gap-2">
              <Bell />
              <Bell />
              <Bell />
              <span>Новый заказ</span>
              <Bell />
              <Bell />
              <Bell />
            </Line>
            <Line />
            <Line>
              Заказ #<strong className="font-semibold underline decoration-4 underline-offset-10">3</strong>
            </Line>
            <Line />
            <Line>Состав заказа:</Line>
            <Line />
            <Line className="pl-[114px]">
              <strong className="font-semibold">Эспрессо</strong>
            </Line>
            <Line>
              Объем: <strong className="font-semibold">M</strong>
            </Line>
            <Line>
              Дополнительно: <strong className="font-semibold">Корица</strong>
            </Line>
            <Line />
            <Line>
              Общая сумма: <strong className="font-semibold">360.0</strong> руб.
            </Line>
            <Time className="absolute bottom-4 right-[31px]" />
          </div>
          <KeyButton className="mt-[6px] gap-4 rounded-b-[48px]" tone="from-[#2c303a] via-[#382f35] to-[#3a302f]">
            Перейти к заказу
            <ArrowTile />
          </KeyButton>
        </section>
      </main>

      <footer className="border-t-2 border-[#3a383a] bg-linear-to-r from-[#1b1c20] via-[#1e1b1b] to-[#1f1b1c] pb-6 pt-[18px]">
        <form className="flex items-center gap-[31px] pl-[30px] pr-9">
          <button type="button" className="flex h-[99px] items-center gap-6 rounded-full bg-[#5088ee] pb-1 pl-9 pr-[38px] text-[45px] font-medium leading-none">
            <svg viewBox="0 0 44 36" className="h-9 w-11" aria-hidden="true">
              <path d="M2 3H42M2 18H42M2 33H42" stroke="#fff" strokeWidth="4.500" strokeLinecap="round" />
            </svg>
            Меню
          </button>
          <button type="button" aria-label="Прикрепить" className="text-[#828282]">
            <svg viewBox="0 0 64 73" className="h-[73px] w-16" fill="none" aria-hidden="true">
              <path
                d="M59 45L43 62C28 78 3 70 3 48C3 42 5 38 10 33L32 8C43 -3 62 4 61 20C61 25 58 29 55 33L36 53C29 60 17 57 17 47C17 43 19 40 22 37L36 23"
                stroke="currentColor"
                strokeWidth="4.600"
                strokeLinecap="round"
              />
            </svg>
          </button>
          <div className="flex h-[103px] min-w-0 flex-1 items-center gap-9 rounded-full bg-[#060606] pb-1 pl-[39px] pr-[22px] text-[#7c7c7c]">
            <input
              type="text"
              aria-label="Сообщение"
              placeholder="Сообщение"
              className="min-w-0 flex-1 bg-transparent text-[54px] leading-[76px] text-white outline-none placeholder:text-[#7a7a7a]"
            />
            <button type="button" aria-label="Стикеры">
              <svg viewBox="0 0 58 58" className="h-[58px] w-[58px]" fill="none" stroke="currentColor" strokeWidth="4.800" strokeLinejoin="round" aria-hidden="true">
                <path d="M22 3C10 6 2.500 17 2.500 30C2.500 45 14 55.500 29 55.500C43 55.500 54 46 55.500 34C55.500 29 51 24 46 19L34 7C30 3 27 2 22 3ZM22 3C22 25 29 36 55 35" />
              </svg>
            </button>
            <button type="button" aria-label="Клавиатура бота">
              <svg viewBox="0 0 61 61" className="h-[61px] w-[61px]" fill="none" stroke="currentColor" strokeWidth="4.800" aria-hidden="true">
                <rect x="2.500" y="2.500" width="56" height="56" rx="13" />
                <g strokeWidth="4">
                  <circle cx="21" cy="21" r="5.500" />
                  <circle cx="40" cy="21" r="5.500" />
                  <circle cx="21" cy="40" r="5.500" />
                  <circle cx="40" cy="40" r="5.500" />
                </g>
              </svg>
            </button>
          </div>
          <button type="button" aria-label="Голосовое сообщение" className="ml-1 text-[#828282]">
            <svg viewBox="0 0 56 76" className="h-[76px] w-14" fill="none" stroke="currentColor" strokeWidth="4.600" strokeLinecap="round" aria-hidden="true">
              <rect x="15" y="3" width="27" height="48" rx="13.500" />
              <path d="M2.500 34C3 72 53 72 53.500 34M28 63V74" />
            </svg>
          </button>
        </form>
        <div className="mx-auto mt-[82px] h-[15px] w-[460px] rounded-full bg-white" />
      </footer>
    </div>
  );
}
